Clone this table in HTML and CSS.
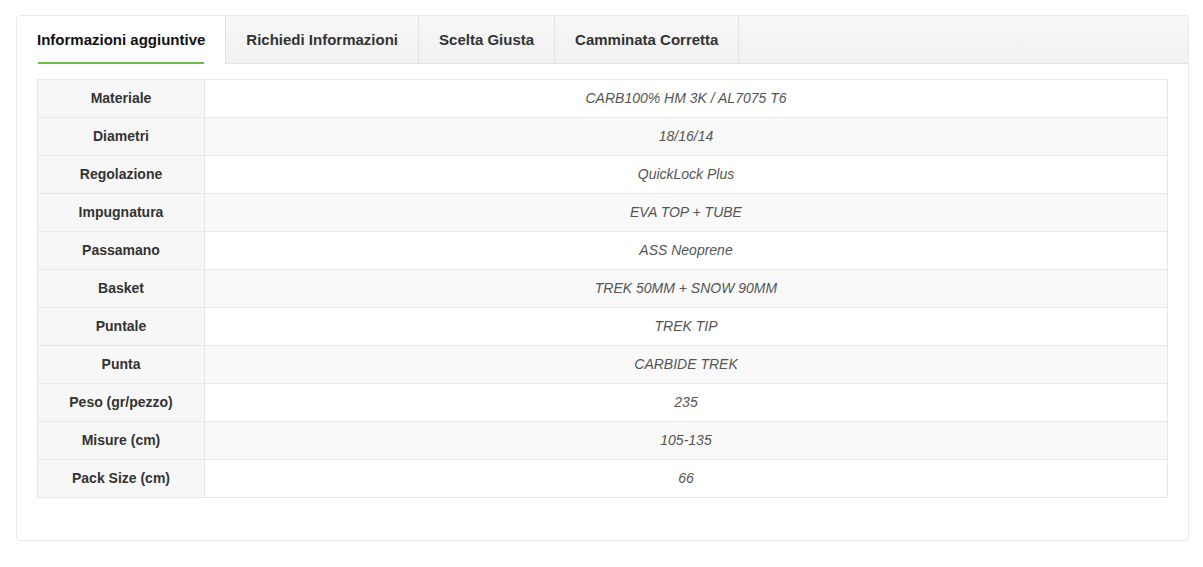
FILE: index.html
```html
<!DOCTYPE html>
<html lang="it">
<head>
<meta charset="utf-8">
<title>Informazioni aggiuntive</title>
<link rel="stylesheet" href="styles.css">
</head>
<body>
<div class="card">
  <div class="tabs">
    <div class="tab active"><span class="tab-label">Informazioni aggiuntive</span></div>
    <div class="tab"><span class="tab-label">Richiedi Informazioni</span></div>
    <div class="tab"><span class="tab-label">Scelta Giusta</span></div>
    <div class="tab"><span class="tab-label">Camminata Corretta</span></div>
    <div class="tab-fill"></div>
  </div>
  <div class="panel">
    <table class="specs">
      <tbody>
        <tr><th>Materiale</th><td>CARB100% HM 3K / AL7075 T6</td></tr>
        <tr><th>Diametri</th><td>18/16/14</td></tr>
        <tr><th>Regolazione</th><td>QuickLock Plus</td></tr>
        <tr><th>Impugnatura</th><td>EVA TOP + TUBE</td></tr>
        <tr><th>Passamano</th><td>ASS Neoprene</td></tr>
        <tr><th>Basket</th><td>TREK 50MM + SNOW 90MM</td></tr>
        <tr><th>Puntale</th><td>TREK TIP</td></tr>
        <tr><th>Punta</th><td>CARBIDE TREK</td></tr>
        <tr><th>Peso (gr/pezzo)</th><td>235</td></tr>
        <tr><th>Misure (cm)</th><td>105-135</td></tr>
        <tr><th>Pack Size (cm)</th><td>66</td></tr>
      </tbody>
    </table>
  </div>
</div>
</body>
</html>
```
FILE: styles.css
```css
html, body {
  margin: 0;
  padding: 0;
  background: #ffffff;
}
body {
  padding: 15px 15px 0 16px;
  font-family: "Liberation Sans", Arial, sans-serif;
}
.card {
  width: 1173px;
  height: 526px;
  border: 1px solid #e9e9e9;
  border-radius: 4px;
  box-sizing: border-box;
  background: #fff;
}
.tabs {
  display: flex;
  height: 48px;
  box-sizing: border-box;
  border-bottom: 1px solid #e3e3e3;
}
.tab {
  display: flex;
  align-items: center;
  padding: 0 20px 1px 20px;
  background: linear-gradient(#f7f7f7, #f1f1f1);
  border-left: 1px solid #e2e2e2;
  font-size: 15px;
  font-weight: bold;
  color: #333;
  box-sizing: border-box;
  height: 47px;
}
.tab.active {
  background: #fff;
  border-left: none;
  color: #111;
  padding: 0 20px 2px 20px;
  height: 48px;
  position: relative;
  border-top-left-radius: 4px;
}
.tab.active::after {
  content: "";
  position: absolute;
  left: 21px;
  right: 21px;
  bottom: 0;
  height: 2px;
  background: #6cbd45;
}
.tab-fill {
  flex: 1;
  background: linear-gradient(#f7f7f7, #f1f1f1);
  border-left: 1px solid #e2e2e2;
  height: 47px;
  border-top-right-radius: 4px;
}
.panel {
  padding: 15px 20px 0 20px;
}
.specs {
  width: 1131px;
  border-collapse: collapse;
  border: 1px solid #e6e6e6;
  font-size: 14px;
}
.specs th, .specs td {
  height: 38px;
  padding: 0 0 2px 0;
  box-sizing: border-box;
  border-top: 1px solid #e8e8e8;
  text-align: center;
}
.specs th {
  width: 167px;
  background: #f7f7f7;
  color: #333;
  font-weight: bold;
  border-right: 1px solid #e6e6e6;
}
.specs td {
  font-style: italic;
  color: #555;
  background: #fff;
}
.specs tr:nth-child(even) td {
  background: #f9f9f9;
}
```
